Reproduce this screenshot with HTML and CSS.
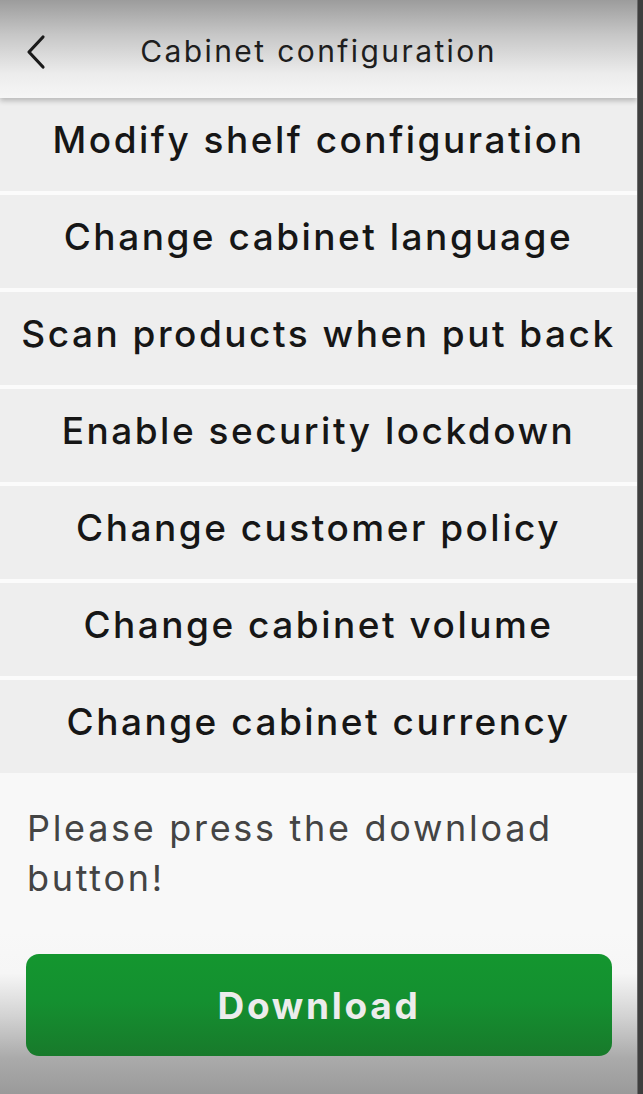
FILE: index.html
```html
<!DOCTYPE html>
<html lang="en">
<head>
<meta charset="utf-8">
<title>Cabinet configuration</title>
<link rel="stylesheet" href="styles.css">
</head>
<body>
<div class="screen">
  <header class="topbar">
    <button class="back" aria-label="Back">
      <svg width="24" height="36" viewBox="0 0 24 36"><path d="M17 3 L3 18 L17 33" fill="none" stroke="#1a1a1a" stroke-width="3.2" stroke-linecap="round" stroke-linejoin="round"/></svg>
    </button>
    <h1 class="title">Cabinet configuration</h1>
  </header>
  <ul class="menu">
    <li class="item">Modify shelf configuration</li>
    <li class="item">Change cabinet language</li>
    <li class="item">Scan products when put back</li>
    <li class="item">Enable security lockdown</li>
    <li class="item">Change customer policy</li>
    <li class="item">Change cabinet volume</li>
    <li class="item">Change cabinet currency</li>
  </ul>
  <p class="hint">Please press the download button!</p>
  <div class="footer">
    <button class="download">Download</button>
  </div>
</div>
</body>
</html>
```
FILE: styles.css
```css
html, body {
  margin: 0;
  padding: 0;
  height: 100%;
}
body {
  background: #3e3e3e;
  font-family: Inter, Roboto, "Liberation Sans", sans-serif;
}
.screen {
  width: 638px;
  height: 1094px;
  background: #f8f8f8;
  display: flex;
  flex-direction: column;
  overflow: hidden;
  border-right: 1px solid #6a6a6a;
  box-sizing: border-box;
}
.topbar {
  height: 98px;
  flex: none;
  display: flex;
  align-items: center;
  justify-content: center;
  position: relative;
  background: linear-gradient(to bottom, #9c9c9c 0%, #c6c6c6 35%, #ececec 75%, #f6f6f6 100%);
  box-shadow: 0 3px 5px rgba(0,0,0,0.22);
  z-index: 2;
}
.back {
  position: absolute;
  left: 26px;
  top: 34px;
  background: none;
  border: 0;
  padding: 0;
  width: 24px;
  height: 36px;
}
.back svg { display: block; }
.title {
  margin: 0;
  font-size: 30px;
  font-weight: 400;
  color: #1e1e1e;
  letter-spacing: 2.4px;
  padding-top: 3px;
}
.menu {
  list-style: none;
  margin: 0;
  padding: 0;
  display: flex;
  flex-direction: column;
  gap: 4px;
  background: #fbfbfb;
}
.item {
  height: 83px;
  padding-bottom: 10px;
  background: #eeeeee;
  display: flex;
  align-items: center;
  justify-content: center;
  font-size: 37px;
  font-weight: 500;
  color: #161616;
  letter-spacing: 2.5px;
  white-space: nowrap;
}
.hint {
  margin: 0;
  padding: 30px 20px 0 27px;
  font-size: 36px;
  line-height: 50px;
  color: #444;
  letter-spacing: 2.7px;
  height: 130px;
  flex: none;
}
.footer {
  flex: 1;
  padding: 21px 26px 0 26px;
  background: linear-gradient(to bottom, #f8f8f8 0%, #f6f6f6 25%, #d2d2d2 52%, #aaaaaa 78%, #9a9a9a 100%);
}
.download {
  display: block;
  width: 586px;
  height: 102px;
  border: 0;
  border-radius: 13px;
  background: linear-gradient(to bottom, #14962f 0%, #149030 45%, #187a2b 100%);
  color: #ececec;
  font-family: Inter, Roboto, "Liberation Sans", sans-serif;
  font-size: 37px;
  font-weight: 700;
  letter-spacing: 2.7px;
}
```
